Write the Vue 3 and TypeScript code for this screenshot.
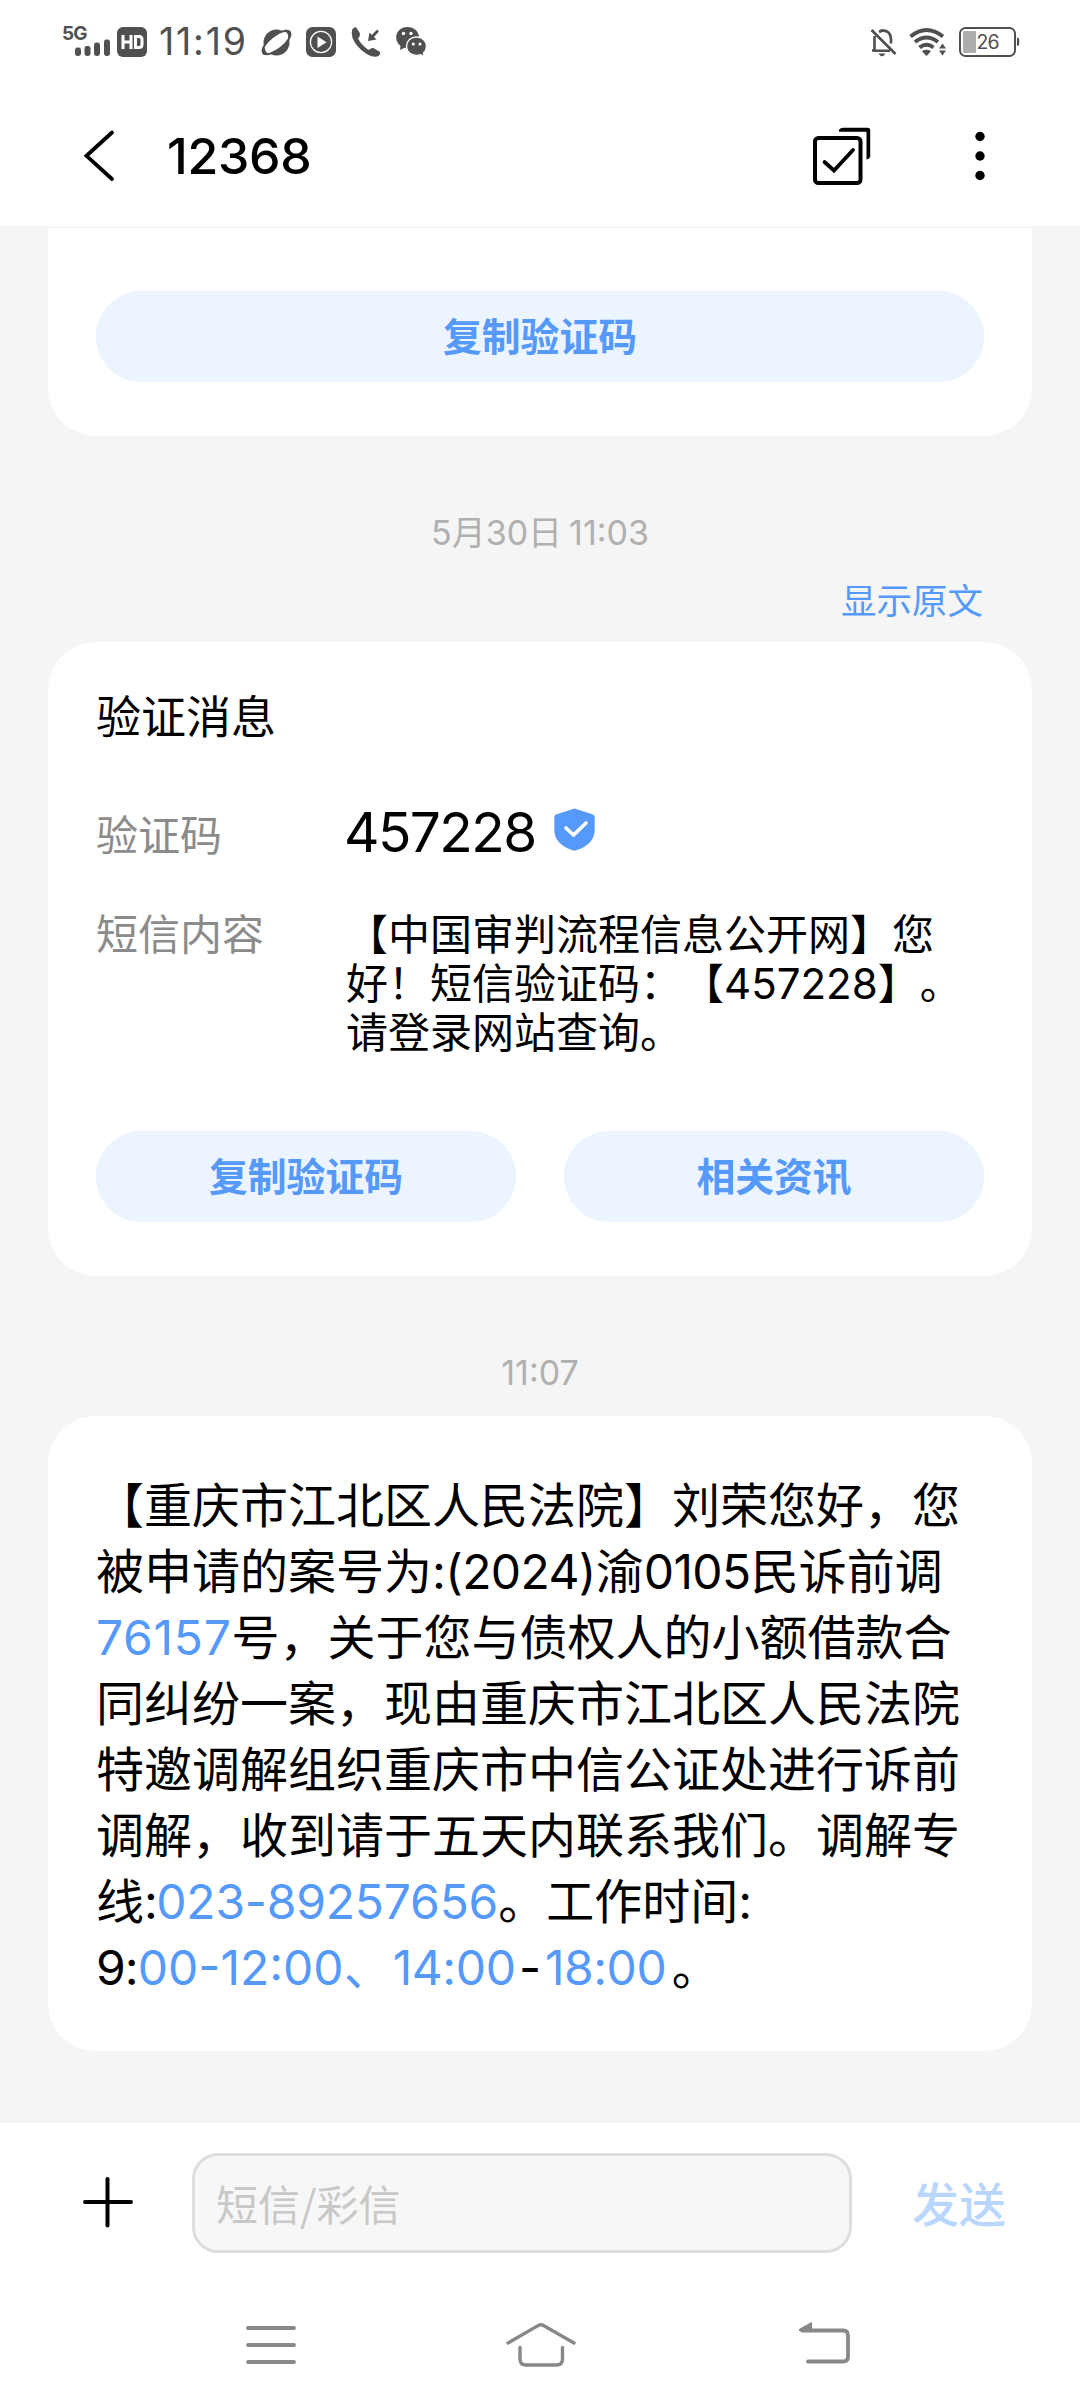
<script setup lang="ts">
interface Segment {
  text: string
  kind?: 'num'
  link?: boolean
  spacing?: number
}

const smsLines: string[][] = [
  ['【中国审判流程信息公开网】您'],
  ['好！短信验证码：【', '457228', '】。'],
  ['请登录网站查询。'],
]

const messageLines: Segment[][] = [
  [{ text: '【重庆市江北区人民法院】刘荣您好，您' }],
  [
    { text: '被申请的案号为' },
    { text: ':(2024)', kind: 'num', spacing: -0.6 },
    { text: '渝' },
    { text: '0105', kind: 'num', spacing: -0.6 },
    { text: '民诉前调' },
  ],
  [
    { text: '76157', kind: 'num', link: true, spacing: 0.7 },
    { text: '号，关于您与债权人的小额借款合' },
  ],
  [{ text: '同纠纷一案，现由重庆市江北区人民法院' }],
  [{ text: '特邀调解组织重庆市中信公证处进行诉前' }],
  [{ text: '调解，收到请于五天内联系我们。调解专' }],
  [
    { text: '线' },
    { text: ':', kind: 'num', spacing: -1.6 },
    { text: '023-89257656', kind: 'num', link: true, spacing: -0.2 },
    { text: '。工作时间' },
    { text: ':', kind: 'num' },
  ],
  [
    { text: '9:', kind: 'num', spacing: -0.9 },
    { text: '00-12:00', kind: 'num', link: true, spacing: 0 },
    { text: '、', link: true, spacing: 1 },
    { text: '14:0', kind: 'num', link: true, spacing: -0.4 },
    { text: '0', kind: 'num', link: true, spacing: 3 },
    { text: '-', kind: 'num', spacing: 4 },
    { text: '18:0', kind: 'num', link: true, spacing: -0.5 },
    { text: '0', kind: 'num', link: true, spacing: 5 },
    { text: '。' },
  ],
]
</script>

<template>
  <div class="screen">
    <header class="top">
      <div class="status">
        <svg class="signal" width="48" height="34" viewBox="0 0 48 34">
          <text x="-1" y="16" class="net">5G</text>
          <g fill="#505050">
            <rect x="12" y="23.5" width="6" height="8.5" rx="2.4" />
            <rect x="21.5" y="22" width="6" height="10" rx="2.4" />
            <rect x="31" y="18.5" width="6" height="13.5" rx="2.4" />
            <rect x="41" y="15.5" width="6" height="16.5" rx="2.4" />
          </g>
        </svg>
        <svg class="hd" width="30" height="30" viewBox="0 0 30 30">
          <rect width="30" height="30" rx="6" fill="#505050" />
          <path d="M6 8v14M14 8v14M6 15h8M18.500 9.500v11h3.500q3 0 3-3v-5q0-3-3-3z" fill="none" stroke="#fff" stroke-width="3" />
        </svg>
        <span class="clock">11:19</span>
        <svg class="planet" width="32" height="30" viewBox="0 0 32 30">
          <circle cx="15.500" cy="14.500" r="13" fill="#505050" />
          <ellipse cx="15.500" cy="14.500" rx="16.800" ry="6.800" transform="rotate(-38 15.500 14.500)" fill="#fff" stroke="#505050" stroke-width="2" />
          <path d="M22 2Q28 1 29.500 3.200Q30.500 6 27 11Q28.500 5 22 2ZM4 18Q0 25 2 26.500Q5 27.500 9 26.500Q3 24.500 4 18Z" fill="#505050" />
        </svg>
        <svg class="play" width="30" height="30" viewBox="0 0 30 30">
          <rect width="30" height="30" rx="6.500" fill="#505050" />
          <circle cx="15" cy="15" r="10.600" fill="none" stroke="#fff" stroke-width="1.200" />
          <path d="M11.500 9.500v11.500L20.500 15.300z" fill="#fff" />
        </svg>
        <svg class="call" width="30" height="30" viewBox="0 0 30 30">
          <path d="M1.200 2.500Q4-.8 5.500.8L9 6.500Q9.500 8.500 7 11.500Q10.500 18 17.500 23Q20.500 20.500 22.500 21L29 25Q30 27 27.500 29Q23 31.500 15 26.500Q5 20 1.500 11Q0 6 1.200 2.500Z" fill="#505050" />
          <path d="M27 3.500L20 11" stroke="#505050" stroke-width="2.600" />
          <path d="M18.500 5.500L17 14L25.500 12.500Z" fill="#505050" />
        </svg>
        <svg class="wechat" width="31" height="30" viewBox="0 0 31 30">
          <path d="M11.500 0C5 0 .2 4.500.2 10.500Q.2 15.500 4.500 19L4 23L8.500 20.800Q11 21.500 13.500 21C20 20 23 16 23 10.500C23 4.500 18 0 11.500 0Z" fill="#505050" />
          <circle cx="7.500" cy="6.500" r="1.700" fill="#fff" />
          <circle cx="15" cy="6.500" r="1.700" fill="#fff" />
          <path d="M20.500 10C14.500 10 10.500 14 10.500 19.200C10.500 24.500 14.500 28.500 20.500 28.500Q22.500 28.500 24.500 27.700L28 29.500L27.500 26Q30.500 23.500 30.500 19.200C30.500 14 26.500 10 20.500 10Z" fill="#505050" stroke="#fff" stroke-width="1.400" />
          <circle cx="17.300" cy="17" r="1.500" fill="#fff" />
          <circle cx="24" cy="17" r="1.500" fill="#fff" />
        </svg>
        <svg class="bell" width="27" height="30" viewBox="0 0 27 30">
          <path d="M4.500 8v14.500H2M4 22.800h16M9 4Q14.500 1 18.500 4.500Q21.500 7.500 21 15.500" fill="none" stroke="#505050" stroke-width="2.600" />
          <path d="M9 3Q12-1 15 3ZM8.500 25.500h7Q12 31 8.500 25.500Z" fill="#505050" />
          <path d="M1.500 2L25.500 26" stroke="#505050" stroke-width="2.600" />
        </svg>
        <svg class="wifi" width="38" height="28" viewBox="0 0 38 28">
          <g fill="none" stroke="#505050" stroke-width="3.800">
            <path d="M1.500 8.500Q17.500-4.500 34 8.500" />
            <path d="M6 14Q17.500 5 29 14" />
            <path d="M10.500 19.500Q17.500 14 24.500 19.500" />
          </g>
          <path d="M13 23.200Q17.500 20.500 22 23.200L17.500 28Z" fill="#505050" />
          <path d="M33.500 15.500L37 20.500H30ZM30 22.500H37L33.500 27.500Z" fill="#505050" />
        </svg>
        <svg class="battery" width="61" height="30" viewBox="0 0 61 30">
          <rect x="1" y="1" width="55" height="28" rx="5.500" fill="none" stroke="#505050" stroke-width="2" />
          <rect x="4" y="4" width="13" height="22" rx="1" fill="#adadad" />
          <path d="M58 10.500q2.200 0 2.200 2v4.500q0 2-2.200 2z" fill="#505050" />
          <text x="17.500" y="22" class="level">26</text>
        </svg>
      </div>
      <div class="bar">
        <svg class="back" width="32" height="52" viewBox="0 0 32 52">
          <path d="M28 2.500L2.500 25.800L28 49" fill="none" stroke="#000" stroke-width="3.800" stroke-linecap="round" />
        </svg>
        <h1>12368</h1>
        <svg class="select" width="60" height="60" viewBox="0 0 60 60">
          <path d="M26 4.300Q27.500 2.200 30 2.200H54.500Q57.200 2.200 57.200 5V30.500Q57.200 33 53.500 34V6.200H26Z" transform="translate(0 -.5)" fill="#000" />
          <rect x="2" y="12" width="45.500" height="45" rx="3.500" fill="none" stroke="#000" stroke-width="4" />
          <path d="M11.500 36L21 44.500L40 24" fill="none" stroke="#000" stroke-width="3.800" stroke-linecap="round" />
        </svg>
        <svg class="more" width="10" height="50" viewBox="0 0 10 50">
          <circle cx="5" cy="5.500" r="4.700" />
          <circle cx="5" cy="25" r="4.700" />
          <circle cx="5" cy="44.500" r="4.700" />
        </svg>
      </div>
    </header>

    <main class="thread">
      <section class="card clipped">
        <button class="action">复制验证码</button>
      </section>

      <p class="stamp first"><span class="num">5</span>月<span class="num">30</span>日<span class="num hour">11:03</span></p>
      <a class="original">显示原文</a>

      <section class="card verify">
        <h2>验证消息</h2>
        <div class="field code-row">
          <span class="label">验证码</span>
          <strong class="code">457228</strong>
          <svg class="shield" width="41" height="43" viewBox="0 0 41 43">
            <path d="M20.500 .5L39 6.500Q40.700 7.200 40.700 9V22Q40.500 36 23 42Q20.500 43 18 42Q.5 36 .3 22V9Q.3 7.200 2 6.500Z" fill="#5599fb" />
            <path d="M12 20L19.500 27L32 15" fill="none" stroke="#fff" stroke-width="3.600" stroke-linecap="round" />
          </svg>
        </div>
        <div class="field">
          <span class="label">短信内容</span>
          <div class="sms">
            <div v-for="(line, i) in smsLines" :key="i" class="sms-line">
              <span v-for="(part, j) in line" :key="j" :class="{ num: j === 1 }">{{ part }}</span>
            </div>
          </div>
        </div>
        <div class="actions">
          <button class="action">复制验证码</button>
          <button class="action">相关资讯</button>
        </div>
      </section>

      <p class="stamp second"><span class="num">11:07</span></p>

      <section class="card message">
        <div v-for="(line, i) in messageLines" :key="i" class="line">
          <span
            v-for="(seg, j) in line"
            :key="j"
            :class="{ num: seg.kind === 'num', link: seg.link }"
            :style="{ letterSpacing: (seg.spacing ?? 0) + 'px' }"
          >{{ seg.text }}</span>
        </div>
      </section>
    </main>

    <footer class="bottom">
      <div class="compose">
        <svg class="plus" width="50" height="50" viewBox="0 0 50 50">
          <path d="M24.500 1V47.500M2 24H48" stroke="#000" stroke-width="4" stroke-linecap="round" />
        </svg>
        <div class="input">短信/彩信</div>
        <span class="send">发送</span>
      </div>
      <nav class="nav">
        <svg class="menu" width="50" height="40" viewBox="0 0 50 40">
          <path d="M2 3H48M2 20H48M2 37H48" stroke="#888" stroke-width="3.800" stroke-linecap="round" />
        </svg>
        <svg class="home" width="70" height="46" viewBox="0 0 70 46">
          <g fill="none" stroke="#888" stroke-width="3.400" stroke-linecap="round">
            <path d="M2 21L32.500 3.400Q35 2 37.500 3.400L68 21" />
            <path d="M14 25.500V37Q14 43 20 43H50.500Q56.500 43 56.500 37V25.500" />
          </g>
        </svg>
        <svg class="return" width="54" height="44" viewBox="0 0 54 44">
          <path d="M4 8.500H45Q50 8.500 50 13.500V34.500Q50 39.500 45 39.500H10" fill="none" stroke="#888" stroke-width="3.800" stroke-linecap="round" />
          <path d="M14 .5V9H1Q.2 7.500 2 6.500L13 .3Z" fill="#888" />
        </svg>
      </nav>
    </footer>
  </div>
</template>

<style>
body {
  background: #f5f5f5;
}
</style>

<style scoped>
.screen {
  width: 1080px;
  height: 2408px;
  display: flex;
  flex-direction: column;
  overflow: hidden;
  background: #f5f5f5;
  color: #000;
  font-family: 'Noto Sans CJK SC', sans-serif;
  text-spacing-trim: space-all;
}
svg {
  flex: none;
  display: block;
  overflow: visible;
}
.num,
h1,
.clock,
.code {
  font-family: Inter, 'Noto Sans CJK SC', sans-serif;
}
.top {
  height: 226px;
  flex: none;
  background: #fff;
  margin-bottom: 2px;
}
.status {
  height: 86px;
  display: flex;
  align-items: flex-start;
  padding-left: 63px;
}
.signal {
  margin-top: 24px;
}
.net {
  font: 700 19px Inter, sans-serif;
  letter-spacing: -1px;
  fill: #505050;
}
.hd {
  margin: 27px 0 0 6px;
}
.clock {
  margin: 19px 0 0 12px;
  width: 90px;
  font-size: 37.5px;
  line-height: 45px;
  letter-spacing: 1.8px;
  color: #505050;
}
.planet {
  margin: 28px 0 0 12px;
}
.play {
  margin: 27px 0 0 13px;
}
.call {
  margin: 27px 0 0 15px;
}
.wechat {
  margin: 27px 0 0 15px;
}
.bell {
  margin: 28px 0 0 auto;
}
.wifi {
  margin: 28px 0 0 12px;
}
.battery {
  margin: 27px 60px 0 12px;
}
.level {
  font: 400 19.5px Inter, sans-serif;
  letter-spacing: -0.8px;
  fill: #505050;
}
.bar {
  height: 140px;
  display: flex;
  align-items: center;
  padding-left: 84px;
}
h1 {
  margin: 0 0 0 51px;
  width: 646px;
  font-size: 50px;
  font-weight: 500;
  line-height: 60px;
  letter-spacing: -0.3px;
}
.more {
  margin-left: 102px;
}
.thread {
  height: 1895px;
  flex: none;
}
.card {
  margin: 0 48px;
  padding: 0 48px;
  box-sizing: border-box;
  background: #fff;
  border-radius: 48px;
}
.clipped {
  height: 208px;
  padding-top: 63px;
  border-radius: 0 0 48px 48px;
}
.action {
  display: block;
  width: 100%;
  height: 91px;
  margin: 0;
  padding: 0 0 4px;
  border: 0;
  border-radius: 46px;
  background: #ecf4ff;
  color: #5599fb;
  font: 700 38.8px/87px 'Noto Sans CJK SC', sans-serif;
}
.stamp {
  margin: 0;
  height: 50px;
  text-align: center;
  color: #b0b0b0;
  font-size: 34px;
  line-height: 50px;
}
.first {
  margin-top: 70px;
}
.hour {
  margin-left: 7px;
}
.original {
  display: block;
  margin: 18px 97px 0 0;
  text-align: right;
  font-size: 35.5px;
  line-height: 50px;
  color: #5599fb;
}
.verify {
  margin-top: 18px;
  height: 634px;
  padding-top: 48px;
}
h2 {
  margin: 0;
  font-size: 45px;
  font-weight: 400;
  line-height: 50px;
}
.field {
  display: flex;
  align-items: flex-start;
}
.code-row {
  padding-top: 68px;
  height: 99px;
}
.label {
  width: 250px;
  flex: none;
  font-size: 42px;
  line-height: 49px;
  color: #8b8b8b;
}
.code {
  font-size: 55px;
  font-weight: 400;
  line-height: 50px;
  letter-spacing: -1.6px;
  margin-top: -1px;
  width: 210px;
  margin-left: -2px;
}
.shield {
  margin-top: 0;
}
.sms {
  font-size: 42px;
  white-space: nowrap;
}
.sms-line {
  height: 49px;
  line-height: 49px;
}
.actions {
  display: flex;
  gap: 48px;
  margin-top: 77px;
}
.second {
  margin-top: 70px;
}
.message {
  margin-top: 20px;
  height: 635px;
  padding-top: 53px;
}
.line {
  height: 66px;
  font-size: 48px;
  line-height: 66px;
  white-space: nowrap;
}
.link {
  color: #5599fb;
}
.bottom {
  flex: none;
  height: 285px;
  background: #fff;
}
.compose {
  display: flex;
  align-items: center;
  height: 159px;
  padding-left: 83px;
}
.input {
  margin-left: 59px;
  width: 660px;
  height: 100px;
  box-sizing: border-box;
  border: 3px solid #dedede;
  border-radius: 26px;
  background: #f7f7f7;
  padding-left: 21px;
  font-size: 42px;
  line-height: 94px;
  color: #c8c8c8;
}
.send {
  margin: -3px 0 0 60px;
  font-size: 47px;
  font-weight: 500;
  color: #b9d7fe;
}
.nav {
  display: flex;
  align-items: flex-start;
  padding: 40px 0 0 246px;
}
.menu {
  margin-top: 3px;
}
.home {
  margin-left: 210px;
}
.return {
  margin-left: 222px;
}
</style>
